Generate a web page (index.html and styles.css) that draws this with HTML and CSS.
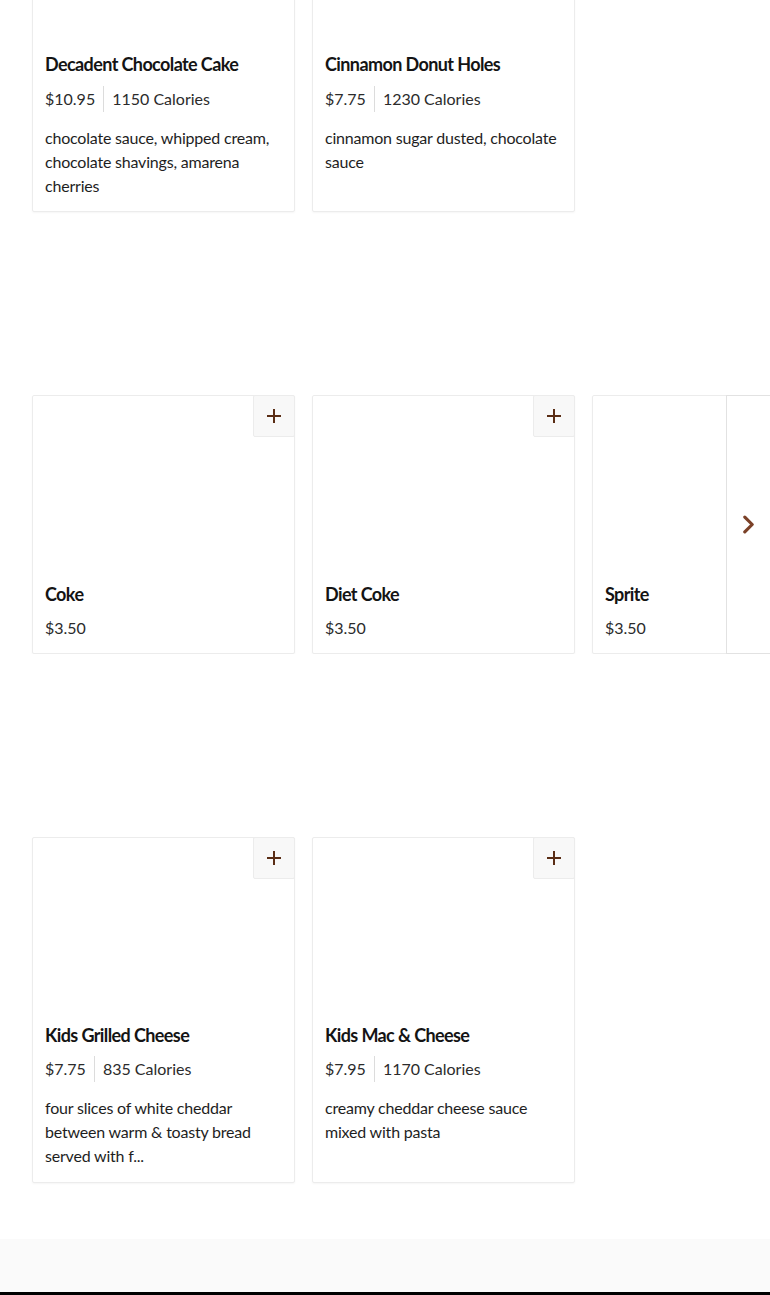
FILE: index.html
```html
<!DOCTYPE html>
<html lang="en">
<head>
<meta charset="utf-8">
<title>Menu</title>
<link rel="stylesheet" href="styles.css">
</head>
<body>
<main class="page">
  <section class="menu-section first">
    <div class="card-row">
      <article class="card">
        <div class="card-image"></div>
        <div class="card-body">
          <h3 class="card-title">Decadent Chocolate Cake</h3>
          <div class="card-meta"><span class="price">$10.95</span><span class="sep"></span><span class="cal">1150 Calories</span></div>
          <p class="card-desc">chocolate sauce, whipped cream, chocolate shavings, amarena cherries</p>
        </div>
      </article>
      <article class="card">
        <div class="card-image"></div>
        <div class="card-body">
          <h3 class="card-title">Cinnamon Donut Holes</h3>
          <div class="card-meta"><span class="price">$7.75</span><span class="sep"></span><span class="cal">1230 Calories</span></div>
          <p class="card-desc">cinnamon sugar dusted, chocolate sauce</p>
        </div>
      </article>
    </div>
  </section>

  <section class="menu-section second">
    <div class="carousel">
      <div class="card-row">
        <article class="card">
          <div class="card-image"></div>
          <button class="add-btn" aria-label="Add"><svg viewBox="0 0 14 14" width="14" height="14"><path d="M7 0v14M0 7h14" stroke="currentColor" stroke-width="2"/></svg></button>
          <div class="card-body">
            <h3 class="card-title">Coke</h3>
            <div class="card-meta"><span class="price">$3.50</span></div>
          </div>
        </article>
        <article class="card">
          <div class="card-image"></div>
          <button class="add-btn" aria-label="Add"><svg viewBox="0 0 14 14" width="14" height="14"><path d="M7 0v14M0 7h14" stroke="currentColor" stroke-width="2"/></svg></button>
          <div class="card-body">
            <h3 class="card-title">Diet Coke</h3>
            <div class="card-meta"><span class="price">$3.50</span></div>
          </div>
        </article>
        <article class="card">
          <div class="card-image"></div>
          <button class="add-btn" aria-label="Add"><svg viewBox="0 0 14 14" width="14" height="14"><path d="M7 0v14M0 7h14" stroke="currentColor" stroke-width="2"/></svg></button>
          <div class="card-body">
            <h3 class="card-title">Sprite</h3>
            <div class="card-meta"><span class="price">$3.50</span></div>
          </div>
        </article>
      </div>
      <button class="next-btn" aria-label="Next"><svg viewBox="0 0 12 18" width="12" height="18"><path d="M2.5 2l7 7-7 7" fill="none" stroke="currentColor" stroke-width="3" stroke-linecap="round" stroke-linejoin="round"/></svg></button>
    </div>
  </section>

  <section class="menu-section last">
    <div class="card-row">
      <article class="card">
        <div class="card-image"></div>
        <button class="add-btn" aria-label="Add"><svg viewBox="0 0 14 14" width="14" height="14"><path d="M7 0v14M0 7h14" stroke="currentColor" stroke-width="2"/></svg></button>
        <div class="card-body">
          <h3 class="card-title">Kids Grilled Cheese</h3>
          <div class="card-meta"><span class="price">$7.75</span><span class="sep"></span><span class="cal">835 Calories</span></div>
          <p class="card-desc">four slices of white cheddar between warm &amp; toasty bread served with f...</p>
        </div>
      </article>
      <article class="card">
        <div class="card-image"></div>
        <button class="add-btn" aria-label="Add"><svg viewBox="0 0 14 14" width="14" height="14"><path d="M7 0v14M0 7h14" stroke="currentColor" stroke-width="2"/></svg></button>
        <div class="card-body">
          <h3 class="card-title">Kids Mac &amp; Cheese</h3>
          <div class="card-meta"><span class="price">$7.95</span><span class="sep"></span><span class="cal">1170 Calories</span></div>
          <p class="card-desc">creamy cheddar cheese sauce mixed with pasta</p>
        </div>
      </article>
    </div>
  </section>
</main>
<footer class="footer"></footer>
<div class="bottom-bar"></div>
</body>
</html>
```

FILE: styles.css
```css
* { box-sizing: border-box; }
html, body { margin: 0; padding: 0; }
body {
  font-family: "Lato", "Liberation Sans", sans-serif;
  color: #222;
  background: #fff;
  overflow: hidden;
  height: 1295px;
}
.page {
  margin-top: -135px;
  padding: 0 0 0 32px;
}
.menu-section.first { margin-bottom: 183px; }
.menu-section.first .card-meta { margin-top: 11px; }
.menu-section.second { margin-bottom: 183px; }
.menu-section.last { margin-bottom: 56px; }
.menu-section.last .card-body { padding-top: 11px; }
.menu-section.last .card-desc { margin-bottom: 1px; }
.carousel { position: relative; overflow: hidden; margin-left: -32px; padding-left: 32px; }
.card-row {
  display: flex;
  gap: 17px;
  align-items: stretch;
}
.card {
  position: relative;
  flex: 0 0 263px;
  width: 263px;
  background: #fff;
  border: 1px solid #ececec;
  border-radius: 2px;
  box-shadow: 0 1px 2px rgba(0,0,0,0.04);
}
.card-image { height: 174px; }
.card-body { padding: 12px 12px 13px; }
.card-title {
  margin: 0;
  font-size: 18px;
  line-height: 24px;
  font-weight: 700;
  letter-spacing: -0.6px;
  color: #141414;
}
.card-meta {
  margin-top: 10px;
  display: flex;
  align-items: center;
  height: 24px;
  font-size: 16px;
  line-height: 24px;
  color: #2b2b2b;
}
.sep {
  width: 1px;
  height: 26px;
  background: #dcdcdc;
  margin: 0 8px;
}
.card-desc {
  margin: 15px 0 0;
  font-size: 16px;
  line-height: 24px;
  letter-spacing: -0.2px;
  color: #1e1e1e;
}
.add-btn {
  position: absolute;
  top: -1px;
  right: -1px;
  width: 42px;
  height: 42px;
  border: 1px solid #ececec;
  border-radius: 2px;
  background: #f8f8f8;
  color: #5a2d15;
  padding: 0;
  display: flex;
  align-items: center;
  justify-content: center;
  cursor: pointer;
}
.add-btn svg { display: block; }
.next-btn {
  position: absolute;
  top: 0;
  right: 0;
  width: 44px;
  height: 100%;
  background: #fff;
  border: 1px solid #e2e2e2;
  border-right: 0;
  padding: 0;
  display: flex;
  align-items: center;
  justify-content: center;
  color: #7b4128;
  cursor: pointer;
}
.next-btn svg { display: block; width: 13px; height: 19px; }
.footer {
  height: 53px;
  background: #fafafa;
}
.bottom-bar {
  height: 3px;
  background: #000;
}
```
